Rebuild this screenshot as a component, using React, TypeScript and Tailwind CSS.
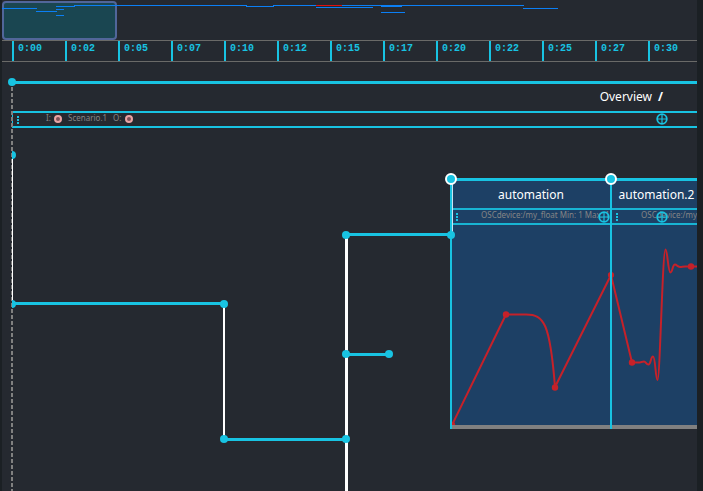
import type { ReactNode } from "react";

const TIMES = [
  "0:00", "0:02", "0:05", "0:07", "0:10", "0:12", "0:15",
  "0:17", "0:20", "0:22", "0:25", "0:27", "0:30",
];

const CYAN = "#18c3e2";

/** x, y, width of each interval shown in the overview strip. */
const MINI_INTERVALS = [
  [2, 8, 35], [36, 11, 21], [56, 6, 19], [74, 5, 173], [56, 9, 8], [56, 15, 8],
  [246, 6, 28], [273, 5, 43], [342, 5, 182], [316, 7, 57], [381, 6, 21],
  [381, 12, 24], [523, 8, 35],
];

const NODES = [
  [12, 82], [224, 304], [224, 439], [346, 439], [346, 354], [389, 354],
  [346, 235], [451, 235],
];

function MiniMap() {
  return (
    <header className="relative h-10 pt-px">
      <div className="h-[39px] w-[115px] rounded border-2 border-[#51669a] bg-[#1a4651]" />
      <svg className="absolute inset-0 h-full w-full" shapeRendering="crispEdges" aria-hidden="true">
        <g transform="translate(-2 0)">
          {MINI_INTERVALS.map(([x, y, w]) => (
            <rect key={`${x}-${y}`} x={x} y={y} width={w} height="1" fill="#0b7ff5" />
          ))}
          <rect x="316" y="5" width="26" height="1" fill="#e01010" />
        </g>
      </svg>
    </header>
  );
}

function Ruler() {
  return (
    <div className="flex h-[22px] overflow-hidden border-y border-[#6a6a68] pl-2.5">
      {TIMES.map((t) => (
        <span
          key={t}
          className="w-[53px] shrink-0 border-l-2 border-[#18c3e2] pl-1 font-['Liberation_Mono',monospace] text-[10px] leading-4 font-bold text-[#18c3e2]"
        >
          {t}
        </span>
      ))}
    </div>
  );
}

function MenuDots() {
  return (
    <button type="button" aria-label="Menu" className="flex h-2 w-0.5 flex-col gap-px">
      <i className="h-0.5 w-0.5 shrink-0 bg-[#18c3e2]" />
      <i className="h-0.5 w-0.5 shrink-0 bg-[#18c3e2]" />
      <i className="h-0.5 w-0.5 shrink-0 bg-[#18c3e2]" />
    </button>
  );
}

function Crosshair({ className }: { className: string }) {
  return (
    <button type="button" aria-label="Add process" className={`absolute ${className}`}>
      <svg width="12" height="12" className="block">
        <circle cx="6" cy="6" r="4.8" fill="none" stroke={CYAN} strokeWidth="1.8" />
        <path d="M6 1v10M1 6h10" stroke={CYAN} strokeWidth="1.2" />
      </svg>
    </button>
  );
}

function Port({ label }: { label: string }) {
  return (
    <button
      type="button"
      aria-label={label}
      className="mt-[3px] h-2 w-2 rounded-full border-2 border-[#eba3a3] bg-[#7d4f56]"
    />
  );
}

function Automation({ name, labels, className, titleClass, crosshair, children }: {
  name: string;
  labels: string[];
  className: string;
  titleClass: string;
  crosshair: string;
  children: ReactNode;
}) {
  return (
    <section className={`absolute top-[116px] border-l-2 border-[#18c3e2] bg-[#1d4065] ${className}`}>
      <div className="h-[3px] bg-[#18c3e2]" />
      <h2 className={`h-[27px] text-center text-[12px] leading-[27px] text-white ${titleClass}`}>
        {name}
      </h2>
      <div className="relative flex h-[17px] border-y-2 border-[#18b4d3] pt-[3px] pl-1">
        <MenuDots />
        <p className="-mt-1 ml-[23px] flex h-3 min-w-0 flex-1 gap-0.5 text-[8px] leading-3 whitespace-nowrap text-[#858585]">
          {labels.map((label) => (
            <span key={label}>{label}</span>
          ))}
        </p>
        <Crosshair className={crosshair} />
      </div>
      <svg className="block h-[200px] w-full overflow-hidden" fill="none" stroke="#c62129" strokeWidth="2">
        {children}
      </svg>
      <div className="h-1 bg-[#808080]" />
    </section>
  );
}

function Curve({ d, points }: { d: string; points: number[][] }) {
  return (
    <>
      <path d={d} strokeLinejoin="round" />
      {points.map(([x, y]) => (
        <circle key={x} cx={x} cy={y} r="3.2" fill="#c62129" stroke="none" />
      ))}
    </>
  );
}

function Connections() {
  return (
    <svg className="pointer-events-none absolute inset-0 h-full w-full" aria-hidden="true">
      <g transform="translate(-2 -62)">
        <path d="M12 87V2000" stroke="#808080" strokeWidth="2" strokeDasharray="4 2" />
        <path d="M12.500 155V304" stroke="#fff" />
        <path d="M224 304V439" stroke="#fff" strokeWidth="2" />
        <path d="M346.500 235V2000" stroke="#fff" strokeWidth="3" />
        <path d="M452.500 184V232" stroke="#c9e4f3" />
        <path
          d="M12 303.500H224M224 439.500H346M346 234.500H451M346 354.500H389"
          stroke={CYAN}
          strokeWidth="3"
        />
        <path d="M12 151a4 4 0 0 1 0 8zM12 300a4 4 0 0 1 0 8z" fill={CYAN} />
        {NODES.map(([x, y]) => (
          <circle key={`${x}-${y}`} cx={x} cy={y} r="4" fill={CYAN} />
        ))}
        {[451, 611].map((x) => (
          <circle key={x} cx={x} cy="179" r="5" fill={CYAN} stroke="#fff" strokeWidth="2" />
        ))}
      </g>
    </svg>
  );
}

export default function App() {
  return (
    <div className="flex h-screen bg-[#1b2024] pr-1.5 pl-0.5 font-['Noto_Sans',sans-serif]">
      <div className="flex min-w-0 flex-1 flex-col bg-[#252930]">
        <MiniMap />
        <Ruler />
        <main className="relative flex-1 overflow-hidden pt-[19px] pl-2.5">
          <div className="h-[3px] bg-[#18c3e2]" />
          <h1 className="flex h-[27px] justify-end gap-1.5 pr-[34px] text-[12px] leading-[25px] text-white">
            <span>Overview</span>
            <span className="font-bold">/</span>
          </h1>
          <div className="relative flex h-[17px] border-y-2 border-l border-[#18c3e2] pt-[3px] pl-1">
            <MenuDots />
            <div className="-mt-1 ml-[27px] flex h-3 text-[8px] leading-3 text-[#858585]">
              <span className="w-2">I:</span>
              <Port label="Input" />
              <span className="w-[51px] pl-1.5">Scenario.1</span>
              <span className="w-3">O:</span>
              <Port label="Output" />
            </div>
            <Crosshair className="top-0 right-[29px]" />
          </div>

          <Automation
            name="automation"
            labels={["OSCdevice:/my_float", "Min: 1", "Max: 1"]}
            className="left-[448px] w-[160px]"
            titleClass=""
            crosshair="top-px right-0"
          >
            <Curve
              d="M0 200L54 89.500H74C92 89.500 98 98 103 162L159 50"
              points={[[0, 200], [54, 89.5], [103, 162.5], [159, 50]]}
            />
          </Automation>
          <Automation
            name="automation.2"
            labels={["OSCdevice:/my_"]}
            className="right-0 left-[608px]"
            titleClass="pl-1"
            crosshair="top-px right-[29px]"
          >
            <Curve
              d="M-1 50L20 137.500H26C29 137.500 30 136.500 32 136.500C34 136.500 34 139.500 36.500 139.500C39 139.500 38.500 131.500 41 131.500C43.500 131.500 43.500 155 45.500 155C48 155 50.500 24.500 53.500 24.500C55.500 24.500 56 47.500 58.500 47.500C60.500 47.500 60.500 39.500 63 39.500C65 39.500 65 42 68 42C70 42 71 41.500 73 41.500H500"
              points={[[-1, 50], [20, 137.5], [79, 41.5]]}
            />
          </Automation>

          <Connections />
        </main>
      </div>
    </div>
  );
}
